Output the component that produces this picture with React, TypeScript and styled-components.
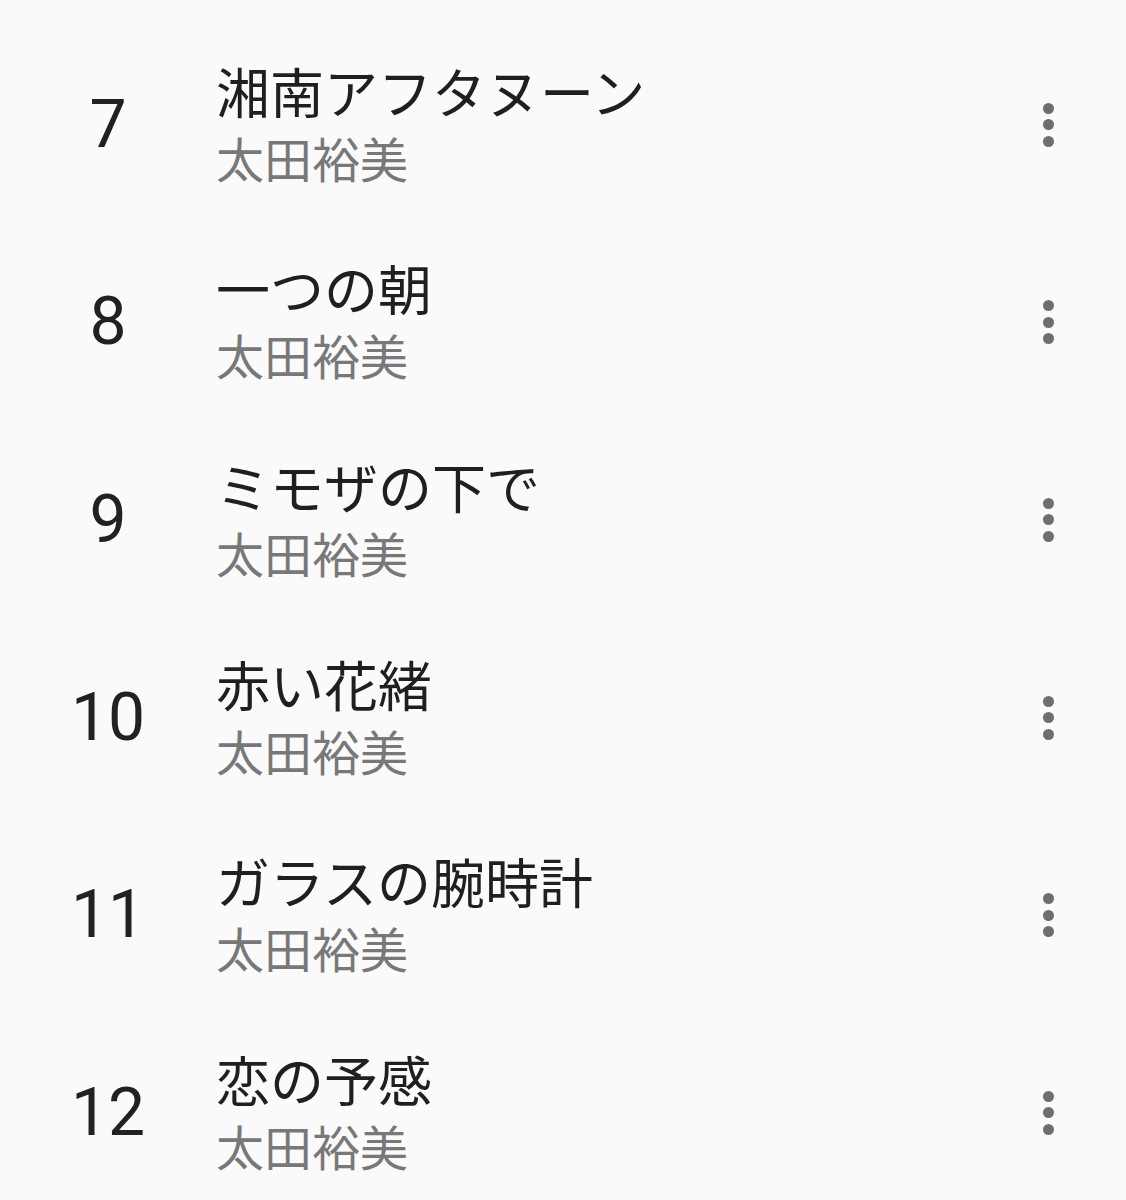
import React from "react";
import styled, { createGlobalStyle } from "styled-components";

const tracks = [
  { no: 7, title: "湘南アフタヌーン" },
  { no: 8, title: "一つの朝" },
  { no: 9, title: "ミモザの下で" },
  { no: 10, title: "赤い花緒" },
  { no: 11, title: "ガラスの腕時計" },
  { no: 12, title: "恋の予感" },
];

const artist = "太田裕美";

const GlobalStyle = createGlobalStyle`
  html, body {
    margin: 0;
    padding: 0;
    background: #fafafa;
  }
  body {
    font-family: "Noto Sans CJK JP", "Noto Sans", sans-serif;
  }
`;

export const App = () => {
  return (
    <>
      <GlobalStyle />
      <List>
        {tracks.map((t) => (
          <Row key={t.no}>
            <Number>{t.no}</Number>
            <Info>
              <Title>{t.title}</Title>
              <Artist>{artist}</Artist>
            </Info>
            <MoreButton aria-label="more">
              <Dot />
              <Dot />
              <Dot />
            </MoreButton>
          </Row>
        ))}
      </List>
    </>
  );
};

export default App;

const List = styled.div`
  width: 1126px;
  height: 1200px;
  padding-top: 26px;
  box-sizing: border-box;
  background: #fafafa;
  overflow: hidden;
`;

const Row = styled.div`
  display: flex;
  align-items: center;
  height: 197.6px;
`;

const Number = styled.div`
  width: 216px;
  flex-shrink: 0;
  text-align: center;
  font-family: Roboto, "Noto Sans", sans-serif;
  font-size: 66px;
  color: #212121;
  line-height: 1;
`;

const Info = styled.div`
  flex: 1;
  display: flex;
  flex-direction: column;
  margin-bottom: 8px;
`;

const Title = styled.div`
  font-size: 54px;
  line-height: 72px;
  color: #1f1f1f;
  white-space: nowrap;
`;

const Artist = styled.div`
  font-size: 48px;
  line-height: 60px;
  color: #787878;
  white-space: nowrap;
`;

const MoreButton = styled.div`
  display: flex;
  flex-direction: column;
  align-items: center;
  gap: 5.5px;
  width: 11px;
  margin-right: 72px;
`;

const Dot = styled.span`
  width: 11px;
  height: 11px;
  border-radius: 50%;
  background: #6e6e6e;
`;
